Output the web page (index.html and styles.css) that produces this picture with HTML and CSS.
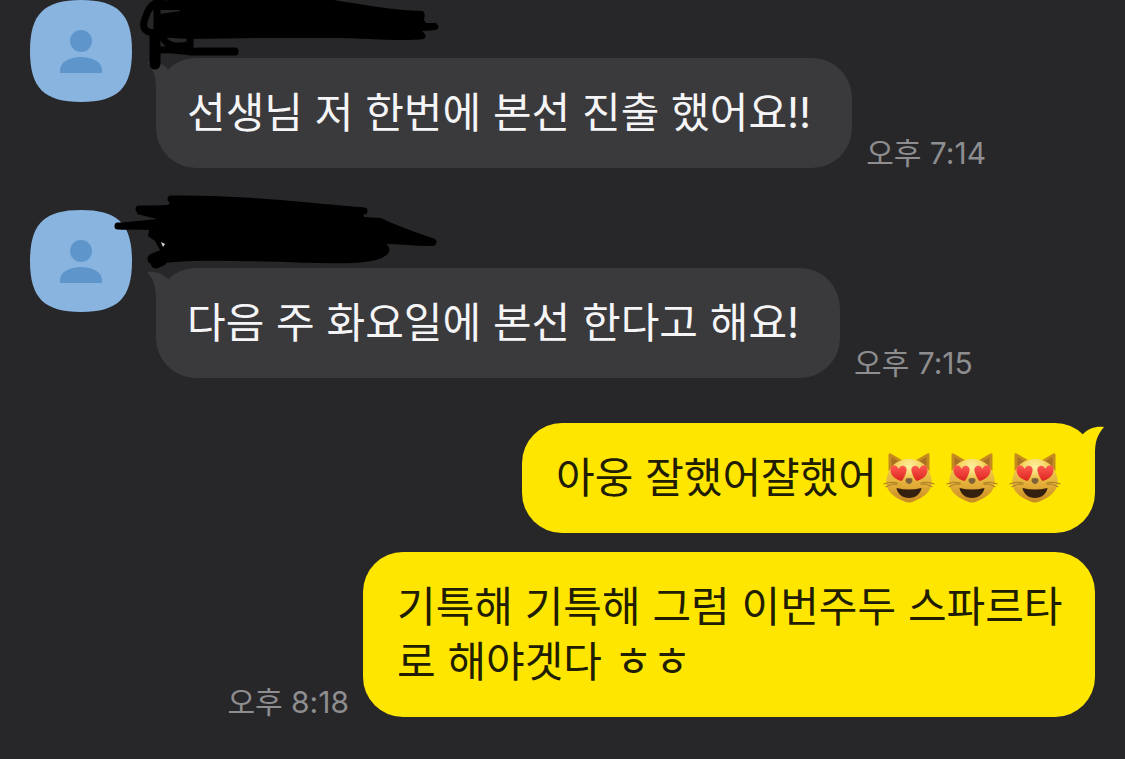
FILE: index.html
```html
<!DOCTYPE html>
<html lang="ko">
  <head>
    <meta charset="UTF-8" />
    <meta name="viewport" content="width=device-width, initial-scale=1.0" />
    <title>채팅</title>
    <link rel="stylesheet" href="styles.css">
  </head>
  <body>
    <!-- shared shapes -->
    <svg class="defs" aria-hidden="true">
      <defs>
        <linearGradient id="fur" x1="0" y1="0" x2="0" y2="1">
          <stop offset="0" stop-color="#f6d65c" />
          <stop offset="0.5" stop-color="#e6b53c" />
          <stop offset="1" stop-color="#c98a22" />
        </linearGradient>
        <radialGradient id="shine" cx="0.5" cy="0.3" r="0.5">
          <stop offset="0" stop-color="#fff0a0" />
          <stop offset="1" stop-color="#fff0a0" stop-opacity="0" />
        </radialGradient>
        <linearGradient id="heart" x1="0" y1="0" x2="0" y2="1">
          <stop offset="0" stop-color="#ff5a50" />
          <stop offset="1" stop-color="#dc2420" />
        </linearGradient>
      </defs>
      <symbol id="person" viewBox="0 0 102 102">
        <path d="M51 0C88 0 102 14 102 51S88 102 51 102 0 88 0 51 14 0 51 0Z" fill="#89b4e0" />
        <circle cx="51" cy="41" r="11" fill="#5e96cb" />
        <path d="M30 73V70C30 62 40 57 51 57S72 62 72 70V73Z" fill="#5e96cb" />
      </symbol>
      <symbol id="tail" viewBox="0 0 21 40">
        <path d="M0 1C8 0 15 2 21 8V40H9V28C9 16 7 9 0 1Z" fill="currentColor" />
      </symbol>
      <symbol id="cat" viewBox="0 0 51 52">
        <path d="M5 19L5 3Q5 0 8 2L20 9ZM46 19L46 3Q46 0 43 2L31 9Z" fill="#c68b20" />
        <path d="M8 14L8 5L16 10ZM43 14L43 5L35 10Z" fill="#a87220" />
        <path d="M25.500 7C38 7 46 15 48 27C50 38 41 45 31 49Q25.500 52 20 49C10 45 1 38 3 27C5 15 13 7 25.500 7Z" fill="url(#fur)" />
        <ellipse cx="25.500" cy="20" rx="15" ry="13" fill="url(#shine)" />
        <path d="M0 32Q7 29 14 31M2 35Q8 31 14 32M51 32Q44 29 37 31M49 35Q43 31 37 32" fill="none" stroke="#a87a22" stroke-width="1" />
        <path d="M18 29C11 27 7 23 7 18C7 12 13 12 15 17C18 11 24 14 23 19C22 23 20 27 18 29Z" fill="url(#heart)" />
        <path d="M33 29C40 27 44 23 44 18C44 12 38 12 36 17C33 11 27 14 28 19C29 23 31 27 33 29Z" fill="url(#heart)" />
        <path d="M22 28Q22 26 25.500 26T29 28Q29 31 25.500 32Q22 31 22 28Z" fill="#806039" />
        <path d="M13 36Q25.500 39 38 36C37 42 32 46 25.500 46S14 42 13 36Z" fill="#352010" />
      </symbol>
    </svg>

    <main class="chat">
      <div class="message">
        <svg class="avatar" role="img" aria-label="프로필"><use href="#person" /></svg>
        <div class="content">
          <div class="name">
            <svg class="scribble" viewBox="110 -15 330 90" aria-hidden="true">
              <path d="M158 1L190 -2H320C350 2 385 10 422 11Q426 12 424 20L426 23L436 23Q441 27 436 30L422 31Q428 35 424 39C400 42 370 38 330 38H262L190 39L155 37Q154 20 160 14L180 11V10H160Z" />
              <path class="pen" d="M161 1C150 3 147 12 144 22C142 31 149 33 157 33M157 3V35" />
              <path class="pen" d="M163 38C168 48 181 47 190 44V38M190 40V50M160 50C180 49 182 53 200 51H235M190 52H235" />
              <path class="pen thick" d="M155 34V64" />
            </svg>
          </div>
          <div class="line">
            <p class="bubble">
              <svg class="tail" aria-hidden="true"><use href="#tail" /></svg>
              선생님 저 한번에 본선 진출 했어요!!
            </p>
            <time class="time" datetime="19:14">오후 7:14</time>
          </div>
        </div>
      </div>

      <div class="message">
        <svg class="avatar" role="img" aria-label="프로필"><use href="#person" /></svg>
        <div class="content">
          <div class="name">
            <svg class="scribble" viewBox="110 -15 330 90" aria-hidden="true">
              <path d="M138 -3L168 -5L172 -10L240 -10L362 0L364 7L381 8L400 17L435 29Q438 35 432 36C415 36 400 34 385 34L387 44C370 52 330 51 290 51C230 52 200 50 165 49L160 44L163 32L161 42L155 31L148 26L149 20L118 19Q113 16 118 13L157 9L137 4Z" />
              <path class="pen" d="M171 -11C240 -12 300 -4 364 1M139 -1H200M118 16C135 17 145 13 160 14M378 12C400 19 415 27 433 32M160 50C220 42 330 53 360 49C384 47 393 39 380 35" />
              <path class="pen thick" d="M153 49L160 46M156 53L161 51" />
              <path d="M161 32L165 34L163 37Z" fill="#d8d8d8" />
            </svg>
          </div>
          <div class="line">
            <p class="bubble">
              <svg class="tail" aria-hidden="true"><use href="#tail" /></svg>
              다음 주 화요일에 본선 한다고 해요!
            </p>
            <time class="time" datetime="19:15">오후 7:15</time>
          </div>
        </div>
      </div>

      <div class="sent">
        <div class="line mine">
          <p class="bubble">
            <svg class="tail" aria-hidden="true"><use href="#tail" /></svg>
            아웅 잘했어쟐했어<svg class="emoji" role="img" aria-label="하트 눈 고양이"><use href="#cat" /></svg><svg class="emoji" role="img" aria-label="하트 눈 고양이"><use href="#cat" /></svg><svg class="emoji" role="img" aria-label="하트 눈 고양이"><use href="#cat" /></svg>
          </p>
        </div>
        <div class="line mine">
          <p class="bubble">기특해 기특해 그럼 이번주두 스파르타로 해야겟다 ㅎㅎ</p>
          <time class="time" datetime="20:18">오후 8:18</time>
        </div>
      </div>
    </main>
  </body>
</html>
```
FILE: styles.css
```css
* {
  box-sizing: border-box;
}
body {
  margin: 0;
  background: #272729;
  font-family: Inter, "Noto Sans CJK KR", sans-serif;
}
.defs {
  position: absolute;
  width: 0;
  height: 0;
}
.chat {
  display: flex;
  flex-direction: column;
  gap: 42px;
  padding: 0 30px 40px;
}
.message {
  display: flex;
  gap: 24px;
}
.avatar {
  flex: none;
  width: 102px;
  height: 102px;
}
.content {
  flex: 1;
}
.name {
  position: relative;
  height: 58px;
}
/* marker strokes drawn over the name */
.scribble {
  position: absolute;
  z-index: 1;
  top: -15px;
  left: -46px;
  width: 330px;
  height: 90px;
}
.pen {
  fill: none;
  stroke: #000;
  stroke-width: 7px;
  stroke-linecap: round;
  stroke-linejoin: round;
}
.thick {
  stroke-width: 11px;
}
.line {
  display: flex;
  align-items: flex-end;
  gap: 14px;
}
.bubble {
  position: relative;
  margin: 0;
  padding: 27px 41px 28px 31px;
  border-radius: 40px;
  background: #3a3a3c;
  color: #f5f5f7;
  font-size: 42px;
  line-height: 55px;
}
.tail {
  position: absolute;
  top: 3px;
  left: -9px;
  width: 21px;
  height: 40px;
  color: #3a3a3c;
}
.time {
  color: #8e8e90;
  font-size: 30px;
  line-height: 30px;
  white-space: nowrap;
}
.sent {
  display: flex;
  flex-direction: column;
  gap: 19px;
  padding-top: 3px;
}
.mine {
  flex-direction: row-reverse;
}
.mine .bubble {
  max-width: 732px;
  padding-right: 29px;
  padding-left: 34px;
  background: #ffe600;
  color: #211d00;
}
.mine .tail {
  left: auto;
  right: -9px;
  color: #ffe600;
  transform: scaleX(-1);
}
.emoji {
  width: 52px;
  height: 52px;
  margin: -11px 5px -3px 6px;
  vertical-align: middle;
}
```
